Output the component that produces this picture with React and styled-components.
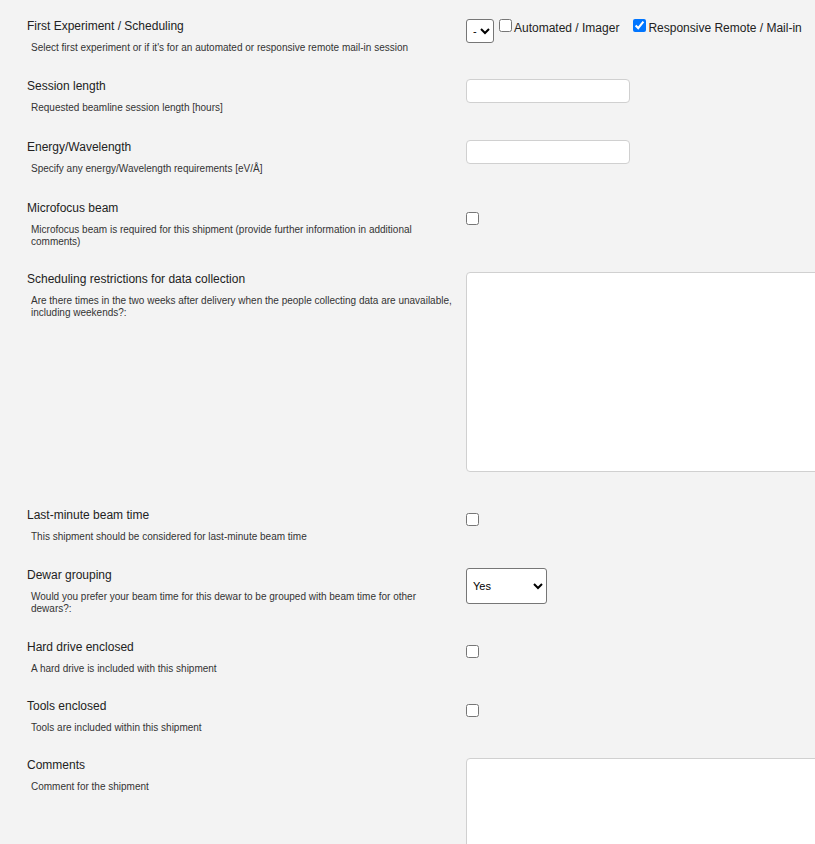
import React from 'react';
import styled, { createGlobalStyle } from 'styled-components';

const GlobalStyle = createGlobalStyle`
  html, body {
    margin: 0;
    padding: 0;
    background: #f3f3f3;
    overflow: hidden;
    font-family: "Liberation Sans", Arial, sans-serif;
  }
`;

const Form = styled.ul`
  list-style: none;
  margin: 0;
  padding: 19px 0 0 27px;
  width: 1000px;
`;

const Row = styled.li`
  display: flex;
  align-items: flex-start;
  padding-bottom: ${({ $space }) => $space || 25}px;
`;

const LabelCol = styled.div`
  flex: none;
  width: 439px;
`;

const Title = styled.div`
  font-size: 12px;
  line-height: 14px;
  color: #222;
`;

const Hint = styled.p`
  margin: 9px 12px 0 4px;
  font-size: 10px;
  line-height: 12px;
  color: #333;
`;

const Field = styled.div`
  display: flex;
  align-items: flex-start;
  padding-top: ${({ $offset }) => $offset || 0}px;
`;

const TextInput = styled.input`
  box-sizing: border-box;
  width: 164px;
  height: 24px;
  margin: 0;
  border: 1px solid #d0d0d0;
  border-radius: 4px;
  background: #fff;
`;

const TextArea = styled.textarea`
  box-sizing: border-box;
  display: block;
  width: 420px;
  height: 200px;
  margin: 0 0 11px;
  border: 1px solid #d0d0d0;
  border-radius: 4px;
  background: #fff;
  resize: none;
`;

const Select = styled.select`
  box-sizing: border-box;
  width: ${({ $w }) => $w}px;
  height: ${({ $h }) => $h}px;
  margin: 0;
  padding: 0 0 0 2px;
  font-family: "Liberation Sans", Arial, sans-serif;
  font-size: 11px;
  color: #000;
  border: 1px solid #767676;
  border-radius: 3px;
  background: #fff;
`;

const Checkbox = styled.input.attrs({ type: 'checkbox' })`
  width: 13px;
  height: 13px;
  margin: 0;
  flex: none;
`;

const CheckLabel = styled.label`
  display: flex;
  align-items: flex-start;
  margin-left: ${({ $gap }) => $gap}px;
  font-size: 12px;
  line-height: 14px;
  color: #222;

  & > span {
    margin: 2px 0 0 2px;
  }
`;

const rows = [
  {
    title: 'Session length',
    hint: 'Requested beamline session length [hours]',
    field: <TextInput type='text' />,
    space: 26,
  },
  {
    title: 'Energy/Wavelength',
    hint: 'Specify any energy/Wavelength requirements [eV/Å]',
    field: <TextInput type='text' />,
    space: 26,
  },
  {
    title: 'Microfocus beam',
    hint: 'Microfocus beam is required for this shipment (provide further information in additional comments)',
    field: <Checkbox />,
    offset: 11,
    space: 24,
  },
  {
    title: 'Scheduling restrictions for data collection',
    hint: 'Are there times in the two weeks after delivery when the people collecting data are unavailable, including weekends?:',
    field: <TextArea />,
  },
  {
    title: 'Last-minute beam time',
    hint: 'This shipment should be considered for last-minute beam time',
    field: <Checkbox />,
    offset: 5,
  },
  {
    title: 'Dewar grouping',
    hint: 'Would you prefer your beam time for this dewar to be grouped with beam time for other dewars?:',
    field: (
      <Select $w={81} $h={36} defaultValue='yes'>
        <option value='yes'>Yes</option>
        <option value='no'>No</option>
      </Select>
    ),
  },
  {
    title: 'Hard drive enclosed',
    hint: 'A hard drive is included with this shipment',
    field: <Checkbox />,
    offset: 5,
    space: 24,
  },
  {
    title: 'Tools enclosed',
    hint: 'Tools are included within this shipment',
    field: <Checkbox />,
    offset: 5,
    space: 24,
  },
  {
    title: 'Comments',
    hint: 'Comment for the shipment',
    field: <TextArea />,
  },
];

const App = () => (
  <>
    <GlobalStyle />
    <Form>
      <Row>
        <LabelCol>
          <Title>First Experiment / Scheduling</Title>
          <Hint>Select first experiment or if it's for an automated or responsive remote mail-in session</Hint>
        </LabelCol>
        <Field>
          <Select $w={28} $h={24} defaultValue=''>
            <option value=''>-</option>
          </Select>
          <CheckLabel $gap={5}>
            <Checkbox />
            <span>Automated / Imager</span>
          </CheckLabel>
          <CheckLabel $gap={14}>
            <Checkbox defaultChecked />
            <span>Responsive Remote / Mail-in</span>
          </CheckLabel>
        </Field>
      </Row>
      {rows.map(row => (
        <Row key={row.title} $space={row.space}>
          <LabelCol>
            <Title>{row.title}</Title>
            <Hint>{row.hint}</Hint>
          </LabelCol>
          <Field $offset={row.offset}>{row.field}</Field>
        </Row>
      ))}
    </Form>
  </>
);

export default App;
